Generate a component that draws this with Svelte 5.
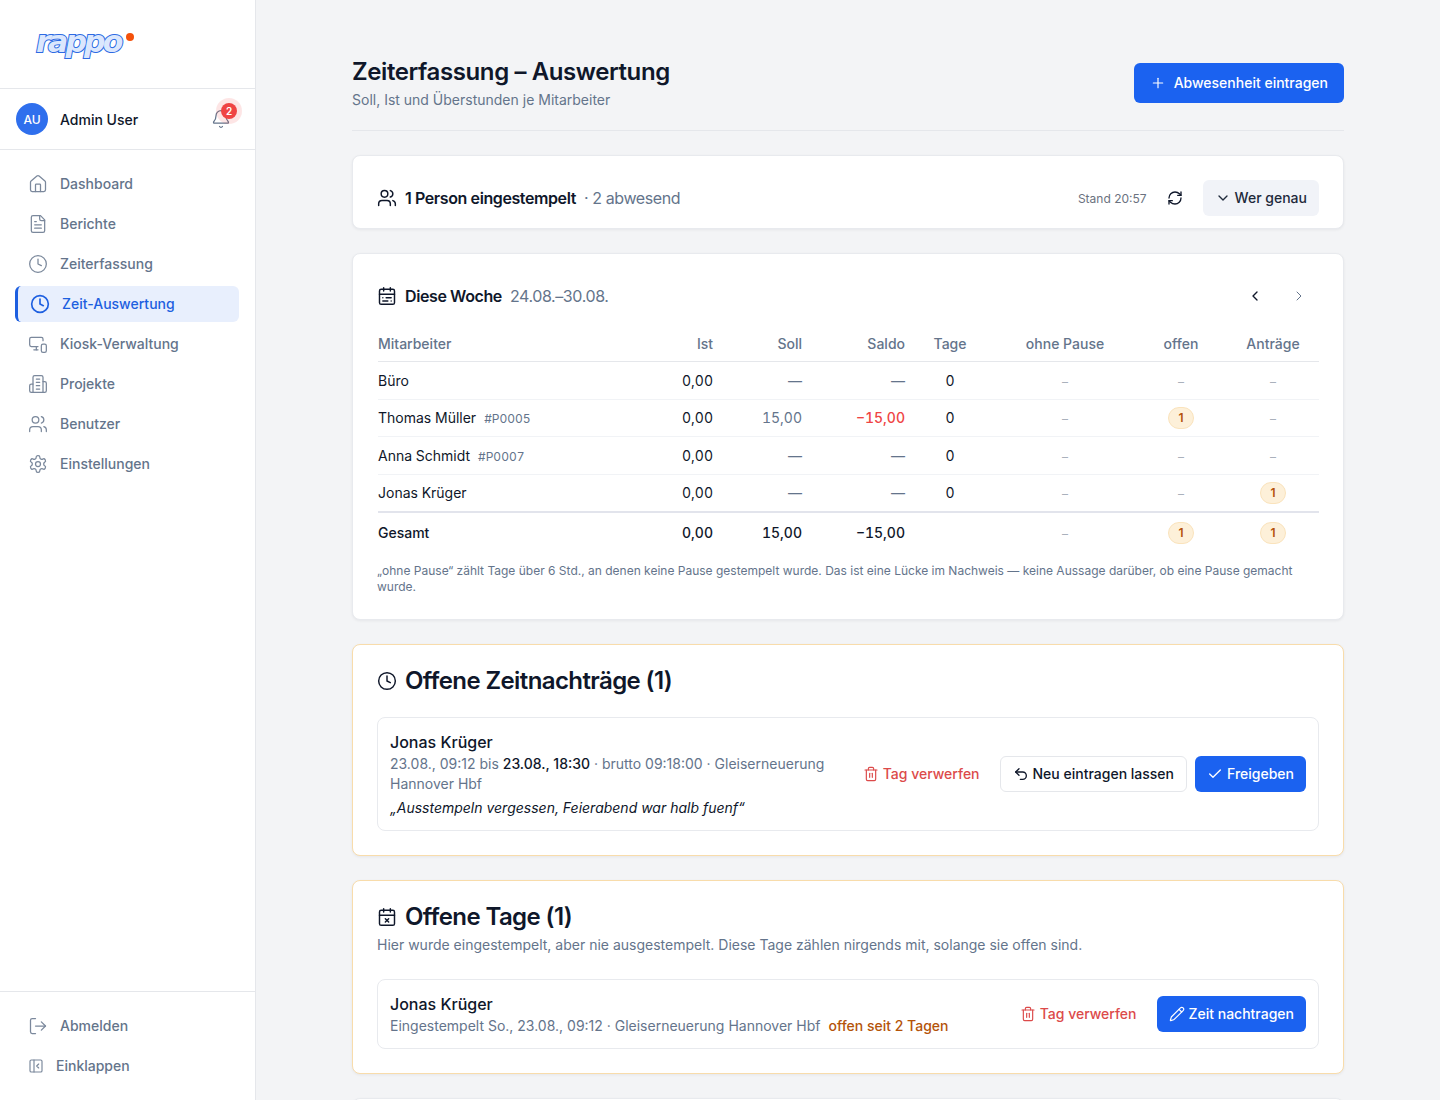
<script>
  const icons = {
    home: '<path d="M15 21v-8a1 1 0 0 0-1-1h-4a1 1 0 0 0-1 1v8"/><path d="M3 10a2 2 0 0 1 .709-1.528l7-5.999a2 2 0 0 1 2.582 0l7 5.999A2 2 0 0 1 21 10v9a2 2 0 0 1-2 2H5a2 2 0 0 1-2-2z"/>',
    file: '<path d="M15 2H6a2 2 0 0 0-2 2v16a2 2 0 0 0 2 2h12a2 2 0 0 0 2-2V7Z"/><path d="M14 2v4a2 2 0 0 0 2 2h4"/><path d="M10 9H8"/><path d="M16 13H8"/><path d="M16 17H8"/>',
    clock: '<circle cx="12" cy="12" r="10"/><polyline points="12 6 12 12 16 14"/>',
    kiosk: '<path d="M18 8V6a2 2 0 0 0-2-2H4a2 2 0 0 0-2 2v7a2 2 0 0 0 2 2h8"/><path d="M10 19v-3.96 3.15"/><path d="M7 19h5"/><rect width="6" height="10" x="16" y="12" rx="2"/>',
    building: '<path d="M6 22V4a2 2 0 0 1 2-2h8a2 2 0 0 1 2 2v18Z"/><path d="M6 12H4a2 2 0 0 0-2 2v6a2 2 0 0 0 2 2h2"/><path d="M18 9h2a2 2 0 0 1 2 2v9a2 2 0 0 1-2 2h-2"/><path d="M10 6h4"/><path d="M10 10h4"/><path d="M10 14h4"/><path d="M10 18h4"/>',
    users: '<path d="M16 21v-2a4 4 0 0 0-4-4H6a4 4 0 0 0-4 4v2"/><circle cx="9" cy="7" r="4"/><path d="M22 21v-2a4 4 0 0 0-3-3.87"/><path d="M16 3.13a4 4 0 0 1 0 7.75"/>',
    settings: '<path d="M12.22 2h-.44a2 2 0 0 0-2 2v.18a2 2 0 0 1-1 1.73l-.43.25a2 2 0 0 1-2 0l-.15-.08a2 2 0 0 0-2.73.73l-.22.38a2 2 0 0 0 .73 2.73l.15.1a2 2 0 0 1 1 1.72v.51a2 2 0 0 1-1 1.74l-.15.09a2 2 0 0 0-.73 2.73l.22.38a2 2 0 0 0 2.73.73l.15-.08a2 2 0 0 1 2 0l.43.25a2 2 0 0 1 1 1.73V20a2 2 0 0 0 2 2h.44a2 2 0 0 0 2-2v-.18a2 2 0 0 1 1-1.73l.43-.25a2 2 0 0 1 2 0l.15.08a2 2 0 0 0 2.73-.73l.22-.39a2 2 0 0 0-.73-2.73l-.15-.08a2 2 0 0 1-1-1.74v-.5a2 2 0 0 1 1-1.74l.15-.09a2 2 0 0 0 .73-2.73l-.22-.38a2 2 0 0 0-2.73-.73l-.15.08a2 2 0 0 1-2 0l-.43-.25a2 2 0 0 1-1-1.73V4a2 2 0 0 0-2-2z"/><circle cx="12" cy="12" r="3"/>',
    logout: '<path d="M9 21H5a2 2 0 0 1-2-2V5a2 2 0 0 1 2-2h4"/><polyline points="16 17 21 12 16 7"/><line x1="21" x2="9" y1="12" y2="12"/>',
    collapse: '<rect width="18" height="18" x="3" y="3" rx="2"/><path d="M9 3v18"/><path d="m16 15-3-3 3-3"/>',
    bell: '<path d="M10.268 21a2 2 0 0 0 3.464 0"/><path d="M3.262 15.326A1 1 0 0 0 4 17h16a1 1 0 0 0 .74-1.673C19.41 13.956 18 12.499 18 8A6 6 0 0 0 6 8c0 4.499-1.411 5.956-2.738 7.326"/>',
    refresh: '<path d="M3 12a9 9 0 0 1 9-9 9.75 9.75 0 0 1 6.74 2.74L21 8"/><path d="M21 3v5h-5"/><path d="M21 12a9 9 0 0 1-9 9 9.75 9.75 0 0 1-6.74-2.74L3 16"/><path d="M8 16H3v5"/>',
    week: '<rect width="18" height="18" x="3" y="4" rx="2"/><path d="M16 2v4"/><path d="M3 10h18"/><path d="M8 2v4"/><path d="M17 14h-6"/><path d="M13 18H7"/><path d="M7 14h.01"/><path d="M17 18h.01"/>',
    calx: '<path d="M8 2v4"/><path d="M16 2v4"/><rect width="18" height="18" x="3" y="4" rx="2"/><path d="M3 10h18"/><path d="m14 14-4 4"/><path d="m10 14 4 4"/>',
    trash: '<path d="M3 6h18"/><path d="M19 6v14c0 1-1 2-2 2H7c-1 0-2-1-2-2V6"/><path d="M8 6V4c0-1 1-2 2-2h4c1 0 2 1 2 2v2"/><line x1="10" x2="10" y1="11" y2="17"/><line x1="14" x2="14" y1="11" y2="17"/>',
    undo: '<path d="M9 14 4 9l5-5"/><path d="M4 9h10.5a5.5 5.5 0 0 1 5.5 5.5a5.5 5.5 0 0 1-5.5 5.5H11"/>',
    check: '<path d="M20 6 9 17l-5-5"/>',
    pencil: '<path d="M21.174 6.812a1 1 0 0 0-3.986-3.987L3.842 16.174a2 2 0 0 0-.5.83l-1.321 4.352a.5.5 0 0 0 .623.622l4.353-1.32a2 2 0 0 0 .83-.497z"/><path d="m15 5 4 4"/>',
    plus: '<path d="M5 12h14"/><path d="M12 5v14"/>',
    down: '<path d="m6 9 6 6 6-6"/>',
    left: '<path d="m15 18-6-6 6-6"/>',
    right: '<path d="m9 18 6-6-6-6"/>'
  }

  const nav = [
    { label: 'Dashboard', icon: 'home' },
    { label: 'Berichte', icon: 'file' },
    { label: 'Zeiterfassung', icon: 'clock' },
    { label: 'Zeit-Auswertung', icon: 'clock', active: true },
    { label: 'Kiosk-Verwaltung', icon: 'kiosk' },
    { label: 'Projekte', icon: 'building' },
    { label: 'Benutzer', icon: 'users' },
    { label: 'Einstellungen', icon: 'settings' }
  ]

  const rows = [
    { name: 'Büro', ist: '0,00', soll: '—', saldo: '—', tage: '0', offen: 0, antraege: 0 },
    { name: 'Thomas Müller', id: '#P0005', ist: '0,00', soll: '15,00', saldo: '−15,00', neg: true, tage: '0', offen: 1, antraege: 0 },
    { name: 'Anna Schmidt', id: '#P0007', ist: '0,00', soll: '—', saldo: '—', tage: '0', offen: 0, antraege: 0 },
    { name: 'Jonas Krüger', ist: '0,00', soll: '—', saldo: '—', tage: '0', offen: 0, antraege: 1 }
  ]
</script>

{#snippet icon(name, size = 16, sw = 2)}
  <svg class="ico" width={size} height={size} viewBox="0 0 24 24" fill="none" stroke="currentColor" stroke-width={sw} stroke-linecap="round" stroke-linejoin="round">{@html icons[name]}</svg>
{/snippet}

{#snippet count(n)}
  {#if n}<span class="badge">{n}</span>{:else}<span class="none">–</span>{/if}
{/snippet}

<div class="app">
  <aside class="sidebar">
    <div class="logo">
      <span class="logo-text">rappo</span><span class="logo-dot"></span>
    </div>
    <div class="user">
      <span class="avatar">AU</span>
      <span class="user-name">Admin User</span>
      <span class="bell">
        {@render icon('bell', 20, 1.5)}
        <span class="bell-count">2</span>
      </span>
    </div>
    <nav class="nav">
      {#each nav as item}
        <a class="nav-item" class:active={item.active} href="#top">
          {@render icon(item.icon, 20, 1.5)}
          <span>{item.label}</span>
        </a>
      {/each}
    </nav>
    <div class="side-foot">
      <a class="nav-item" href="#top">{@render icon('logout', 20, 1.5)}<span>Abmelden</span></a>
      <a class="nav-item collapse" href="#top">{@render icon('collapse', 16, 1.75)}<span>Einklappen</span></a>
    </div>
  </aside>

  <main class="main">
    <header class="page-head">
      <div class="page-title">
        <h1>Zeiterfassung – Auswertung</h1>
        <p>Soll, Ist und Überstunden je Mitarbeiter</p>
      </div>
      <button class="btn primary big">{@render icon('plus', 16, 1.75)}<span>Abwesenheit eintragen</span></button>
    </header>

    <section class="card status">
      {@render icon('users', 20, 1.75)}
      <strong>1 Person eingestempelt</strong>
      <span class="muted-big">· 2 abwesend</span>
      <span class="stand">Stand 20:57</span>
      <span class="refresh">{@render icon('refresh', 16, 2)}</span>
      <button class="btn soft">{@render icon('down', 16, 2)}<span>Wer genau</span></button>
    </section>

    <section class="card week">
      <div class="week-head">
        {@render icon('week', 20, 1.75)}
        <strong>Diese Woche</strong>
        <span class="muted-big">24.08.–30.08.</span>
        <span class="pager">
          {@render icon('left', 16, 2)}
          <span class="pager-off">{@render icon('right', 16, 1.5)}</span>
        </span>
      </div>
      <table>
        <colgroup>
          <col style="width:247px" /><col style="width:88px" /><col style="width:89px" /><col style="width:103px" />
          <col style="width:90px" /><col style="width:140px" /><col style="width:92px" /><col style="width:92px" />
        </colgroup>
        <thead>
          <tr>
            <th>Mitarbeiter</th><th class="r">Ist</th><th class="r">Soll</th><th class="r">Saldo</th>
            <th class="c">Tage</th><th class="c">ohne Pause</th><th class="c">offen</th><th class="c">Anträge</th>
          </tr>
        </thead>
        <tbody>
          {#each rows as row}
            <tr>
              <td>{row.name}{#if row.id}<span class="pid">{row.id}</span>{/if}</td>
              <td class="r">{row.ist}</td>
              <td class="r soft-num">{row.soll}</td>
              <td class="r" class:neg={row.neg} class:soft-num={!row.neg}>{row.saldo}</td>
              <td class="c">{row.tage}</td>
              <td class="c"><span class="none">–</span></td>
              <td class="c">{@render count(row.offen)}</td>
              <td class="c">{@render count(row.antraege)}</td>
            </tr>
          {/each}
        </tbody>
        <tfoot>
          <tr>
            <td class="total">Gesamt</td>
            <td class="r total">0,00</td>
            <td class="r total">15,00</td>
            <td class="r total">−15,00</td>
            <td></td>
            <td class="c"><span class="none">–</span></td>
            <td class="c">{@render count(1)}</td>
            <td class="c">{@render count(1)}</td>
          </tr>
        </tfoot>
      </table>
      <p class="note">„ohne Pause“ zählt Tage über 6 Std., an denen keine Pause gestempelt wurde. Das ist eine Lücke im Nachweis — keine Aussage darüber, ob eine Pause gemacht wurde.</p>
    </section>

    <section class="card warn">
      <h2>{@render icon('clock', 20, 1.75)}Offene Zeitnachträge (1)</h2>
      <div class="entry">
        <div class="entry-text">
          <div class="entry-name">Jonas Krüger</div>
          <div class="entry-meta">23.08., 09:12 bis <b>23.08., 18:30</b> · brutto 09:18:00 · Gleiserneuerung Hannover Hbf</div>
          <div class="entry-quote">„Ausstempeln vergessen, Feierabend war halb fuenf“</div>
        </div>
        <div class="actions">
          <button class="btn danger">{@render icon('trash', 16, 1.75)}<span>Tag verwerfen</span></button>
          <button class="btn outline">{@render icon('undo', 16, 2)}<span>Neu eintragen lassen</span></button>
          <button class="btn primary">{@render icon('check', 16, 2)}<span>Freigeben</span></button>
        </div>
      </div>
    </section>

    <section class="card warn">
      <h2 class="tight">{@render icon('calx', 20, 1.75)}Offene Tage (1)</h2>
      <p class="intro">Hier wurde eingestempelt, aber nie ausgestempelt. Diese Tage zählen nirgends mit, solange sie offen sind.</p>
      <div class="entry compact">
        <div class="entry-text">
          <div class="entry-name">Jonas Krüger</div>
          <div class="entry-meta">Eingestempelt So., 23.08., 09:12 · Gleiserneuerung Hannover Hbf<span class="since">offen seit 2 Tagen</span></div>
        </div>
        <div class="actions">
          <button class="btn danger">{@render icon('trash', 16, 1.75)}<span>Tag verwerfen</span></button>
          <button class="btn primary">{@render icon('pencil', 16, 1.75)}<span>Zeit nachtragen</span></button>
        </div>
      </div>
    </section>

    <section class="card stub"></section>
  </main>
</div>

<style>
  :global(body) {
    margin: 0;
    font-family: Inter, "Liberation Sans", sans-serif;
    color: #0f172a;
    background: #f3f4f6;
  }

  .app {
    display: flex;
    height: 1100px;
    overflow: hidden;
  }

  .ico {
    flex: none;
    display: block;
  }

  .sidebar {
    width: 256px;
    flex: none;
    box-sizing: border-box;
    display: flex;
    flex-direction: column;
    background: #fff;
    border-right: 1px solid #e5e7eb;
  }

  .logo {
    height: 89px;
    flex: none;
    box-sizing: border-box;
    border-bottom: 1px solid #e5e7eb;
    padding: 24px 0 0 36px;
    display: flex;
    align-items: flex-start;
  }

  .logo-text {
    font: italic 700 30px/36px "DejaVu Sans", sans-serif;
    letter-spacing: -2.8px;
    color: #dbe7fd;
    -webkit-text-stroke: 2px #2d6ae3;
    paint-order: stroke fill;
  }

  .logo-dot {
    width: 8px;
    height: 8px;
    border-radius: 50%;
    background: #f4510b;
    margin: 9px 0 0 5px;
  }

  .user {
    height: 61px;
    flex: none;
    box-sizing: border-box;
    border-bottom: 1px solid #e5e7eb;
    padding: 0 16px;
    display: flex;
    align-items: center;
    gap: 12px;
  }

  .avatar {
    width: 32px;
    height: 32px;
    border-radius: 50%;
    background: #2f6fed;
    color: #fff;
    font-size: 12px;
    font-weight: 500;
    display: flex;
    align-items: center;
    justify-content: center;
  }

  .user-name {
    flex: 1;
    font-size: 14px;
    font-weight: 500;
  }

  .bell {
    position: relative;
    color: #64748b;
    margin-right: 8px;
  }

  .bell-count {
    position: absolute;
    top: -6px;
    right: -6px;
    width: 16px;
    height: 16px;
    border-radius: 50%;
    background: #ef4444;
    box-shadow: 0 0 0 5px rgba(239, 68, 68, 0.14);
    color: #fff;
    font-size: 10px;
    font-weight: 600;
    display: flex;
    align-items: center;
    justify-content: center;
  }

  .nav {
    flex: 1;
    padding: 16px 16px 0;
    display: flex;
    flex-direction: column;
    gap: 4px;
  }

  .nav-item {
    height: 36px;
    display: flex;
    align-items: center;
    gap: 12px;
    padding: 0 12px;
    border-radius: 6px;
    color: #64748b;
    font-size: 14px;
    font-weight: 500;
    text-decoration: none;
  }

  .nav-item span {
    margin-bottom: 2px;
  }

  .nav-item.active {
    background: #e8effd;
    color: #1d5fe0;
    border-left: 3px solid #1d5fe0;
    margin-left: -1px;
    padding-left: 12px;
  }

  .nav-item .ico {
    opacity: 0.85;
  }

  .nav-item.active .ico {
    opacity: 1;
    stroke-width: 2;
  }

  .side-foot {
    border-top: 1px solid #e5e7eb;
    padding: 16px 16px 0;
    height: 109px;
    flex: none;
    box-sizing: border-box;
    display: flex;
    flex-direction: column;
    gap: 4px;
  }

  .main {
    flex: 1;
    min-width: 0;
    padding: 56px 96px 0;
    display: flex;
    flex-direction: column;
    gap: 24px;
  }

  .page-head {
    display: flex;
    justify-content: space-between;
    align-items: center;
    border-bottom: 1px solid #e5e7eb;
    padding-bottom: 20px;
    height: 75px;
    flex: none;
    box-sizing: border-box;
  }

  .page-title {
    padding-bottom: 1px;
  }

  h1 {
    margin: 0;
    font-size: 24px;
    line-height: 32px;
    font-weight: 600;
    letter-spacing: -0.4px;
  }

  .page-head p {
    margin: 2px 0 0;
    font-size: 14px;
    line-height: 20px;
    color: #64748b;
  }

  .btn {
    display: inline-flex;
    align-items: center;
    gap: 4px;
    height: 36px;
    padding: 0 12px;
    border: 0;
    border-radius: 6px;
    font: 500 14px/20px Inter, sans-serif;
    white-space: nowrap;
  }

  .primary {
    background: #1b62f0;
    color: #fff;
  }

  .big {
    height: 40px;
    padding: 0 16px;
    gap: 8px;
  }

  .soft {
    background: #f1f3f8;
    color: #1e293b;
    gap: 4px;
  }

  .outline {
    background: #fff;
    border: 1px solid #e5e7eb;
    color: #0f172a;
  }

  .danger {
    background: transparent;
    color: #dc4a4a;
  }

  .card {
    flex: none;
    box-sizing: border-box;
    background: #fff;
    border: 1px solid #e8eaee;
    border-radius: 8px;
    box-shadow: 0 1px 3px rgba(15, 23, 42, 0.06);
  }

  .status {
    height: 74px;
    padding: 12px 24px 0;
    display: flex;
    align-items: center;
    gap: 8px;
  }

  strong {
    font-size: 16px;
    font-weight: 600;
    letter-spacing: -0.4px;
  }

  .muted-big {
    font-size: 16px;
    color: #64748b;
    letter-spacing: -0.4px;
  }

  .stand {
    margin-left: auto;
    font-size: 12px;
    color: #6b7280;
  }

  .refresh {
    margin: 0 12px;
  }

  .week {
    height: 367px;
    padding: 32px 24px 0;
  }

  .week-head {
    display: flex;
    align-items: center;
    gap: 8px;
    height: 20px;
    margin-bottom: 19px;
  }

  .pager {
    margin-left: auto;
    display: flex;
    gap: 28px;
    margin-right: 12px;
  }

  .pager-off {
    color: #64748b;
  }

  table {
    width: 941px;
    margin-left: 1px;
    table-layout: fixed;
    border-collapse: collapse;
    font-size: 14px;
    font-variant-numeric: tabular-nums;
  }

  th {
    height: 36px;
    padding: 0;
    text-align: left;
    font-weight: 500;
    color: #64748b;
    border-bottom: 1px solid #e5e7eb;
  }

  td {
    height: 36.5px;
    padding: 0;
    border-bottom: 1px solid #f1f3f6;
  }

  tbody tr:last-child td {
    border-bottom: 2px solid #e2e4ec;
  }

  tfoot td {
    height: 39px;
    border-bottom: 0;
  }

  .r {
    text-align: right;
  }

  .c {
    text-align: center;
  }

  .pid {
    margin-left: 8px;
    font-size: 12px;
    color: #64748b;
  }

  .soft-num {
    color: #64748b;
  }

  .neg {
    color: #ef4444;
    font-weight: 500;
  }

  .total {
    font-weight: 500;
  }

  .none {
    color: #aab1bc;
    font-size: 12px;
  }

  .badge {
    display: inline-flex;
    align-items: center;
    justify-content: center;
    width: 26px;
    height: 22px;
    box-sizing: border-box;
    border-radius: 11px;
    background: #fdf0d9;
    border: 1px solid #fae3bc;
    color: #b45309;
    font-size: 12px;
    font-weight: 600;
    font-variant-numeric: normal;
    vertical-align: middle;
  }

  .note {
    margin: 11px 0 0;
    font-size: 12px;
    line-height: 16px;
    color: #64748b;
  }

  .warn {
    border-color: #f8dcab;
    padding: 24px;
  }

  h2 {
    margin: 0 0 24px;
    display: flex;
    align-items: center;
    gap: 8px;
    font-size: 24px;
    line-height: 24px;
    font-weight: 600;
    height: 24px;
    letter-spacing: -0.6px;
  }

  h2.tight {
    margin-bottom: 6px;
  }

  .intro {
    margin: 0 0 24px;
    font-size: 14px;
    line-height: 20px;
    color: #64748b;
  }

  .entry {
    border: 1px solid #e8eaee;
    border-radius: 8px;
    padding: 12px;
    display: flex;
    align-items: center;
    gap: 24px;
  }

  .entry-text {
    flex: 1;
    min-width: 0;
  }

  .entry-name {
    font-size: 16px;
    line-height: 24px;
    font-weight: 500;
  }

  .entry-meta {
    font-size: 14px;
    line-height: 20px;
    color: #64748b;
  }

  .entry-meta b {
    font-weight: 500;
    color: #0f172a;
  }

  .entry-quote {
    margin-top: 4px;
    font-size: 14px;
    line-height: 20px;
    font-style: italic;
  }

  .since {
    margin-left: 8px;
    color: #b45309;
    font-weight: 500;
  }

  .actions {
    flex: none;
    display: flex;
    align-items: center;
    gap: 8px;
  }

  .stub {
    height: 40px;
  }
</style>
